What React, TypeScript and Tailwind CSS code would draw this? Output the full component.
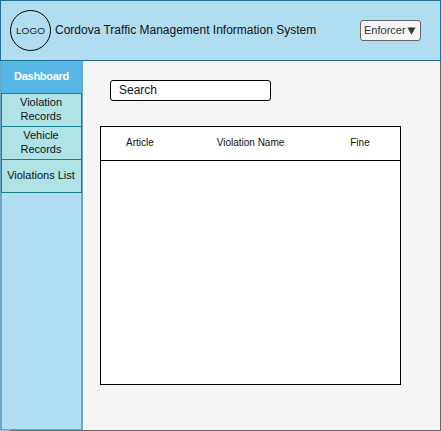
const navItems = [
  { label: 'Violation Records', wrap: true },
  { label: 'Vehicle Records', wrap: true },
  { label: 'Violations List', wrap: false },
];

function Header() {
  return (
    <header className="flex h-[61px] items-center border border-[#1f6d94] bg-[#b1ddf0] pl-[9px] pr-[19px]">
      <div className="flex size-[41px] shrink-0 items-center justify-center rounded-full border border-black">
        <svg width="31" height="12" viewBox="0 0 31 12" className="overflow-visible">
          <text x="1" y="9.2" fontSize="9.5" textLength="29" lengthAdjust="spacingAndGlyphs" fill="#222">LOGO</text>
        </svg>
      </div>
      <h1 className="ml-1 whitespace-nowrap pb-0.5 text-[12px] leading-[14px] text-[#111]">
        Cordova Traffic Management Information System
      </h1>
      <button className="ml-auto flex h-[21px] w-[61px] items-center rounded-[3px] border border-[#666] bg-[#f5f5f5] pl-[3px] text-[11px] leading-none text-[#333]">
        Enforcer
        <svg width="9" height="8" viewBox="0 0 9 8" className="ml-px">
          <path d="M0.5 0.5h8L4.5 7.8z" fill="#333" />
        </svg>
      </button>
    </header>
  );
}

function Sidebar() {
  return (
    <div className="flex w-[83px] shrink-0 flex-col">
      <nav className="flex flex-1 flex-col border-x-2 border-b border-[#6ba8c6] bg-[#b1ddf0]">
        <div className="flex h-8 items-center justify-center pb-0.5 text-[11px] font-bold leading-none tracking-[-0.3px] text-white bg-[#56b7e6]">
          Dashboard
        </div>
        <div className="-mx-px flex flex-col">
          {navItems.map((item) => (
            <a
              key={item.label}
              className="-mb-px flex h-[34px] items-center justify-center border border-[#16838a] bg-[#b0e3e6] pb-0.5 pr-px text-center text-[11px] leading-[14px] text-[#111]"
            >
              <span className={item.wrap ? 'w-12' : 'whitespace-nowrap'}>{item.label}</span>
            </a>
          ))}
        </div>
      </nav>
      <div className="flex h-px">
        <div className="w-[10px] bg-[#8fc0d6]" />
        <div className="flex-1 bg-[#457489]" />
      </div>
    </div>
  );
}

export default function App() {
  return (
    <div className="flex h-[431px] w-[441px] flex-col overflow-hidden bg-[#f5f5f5] font-['Liberation_Sans',Arial,sans-serif]">
      <Header />
      <div className="flex flex-1">
        <Sidebar />
        <main className="flex-1 border-b border-r border-[#666] pl-[17px] pt-[19px]">
          <div className="ml-[10px] flex h-[21px] w-[161px] items-center rounded-[3px] border border-black bg-white pb-0.5 pl-[8px] text-[12px] leading-none text-[#111]">
            Search
          </div>
          <section className="mt-[25px] h-[259px] w-[301px] border border-black bg-white">
            <div className="flex h-[34px] items-center border-b border-black pb-px text-[10px] leading-none text-[#111]">
              <span className="w-[78px] text-center">Article</span>
              <span className="w-[143px] text-center">Violation Name</span>
              <span className="w-[76px] text-center">Fine</span>
            </div>
          </section>
        </main>
      </div>
    </div>
  );
}
